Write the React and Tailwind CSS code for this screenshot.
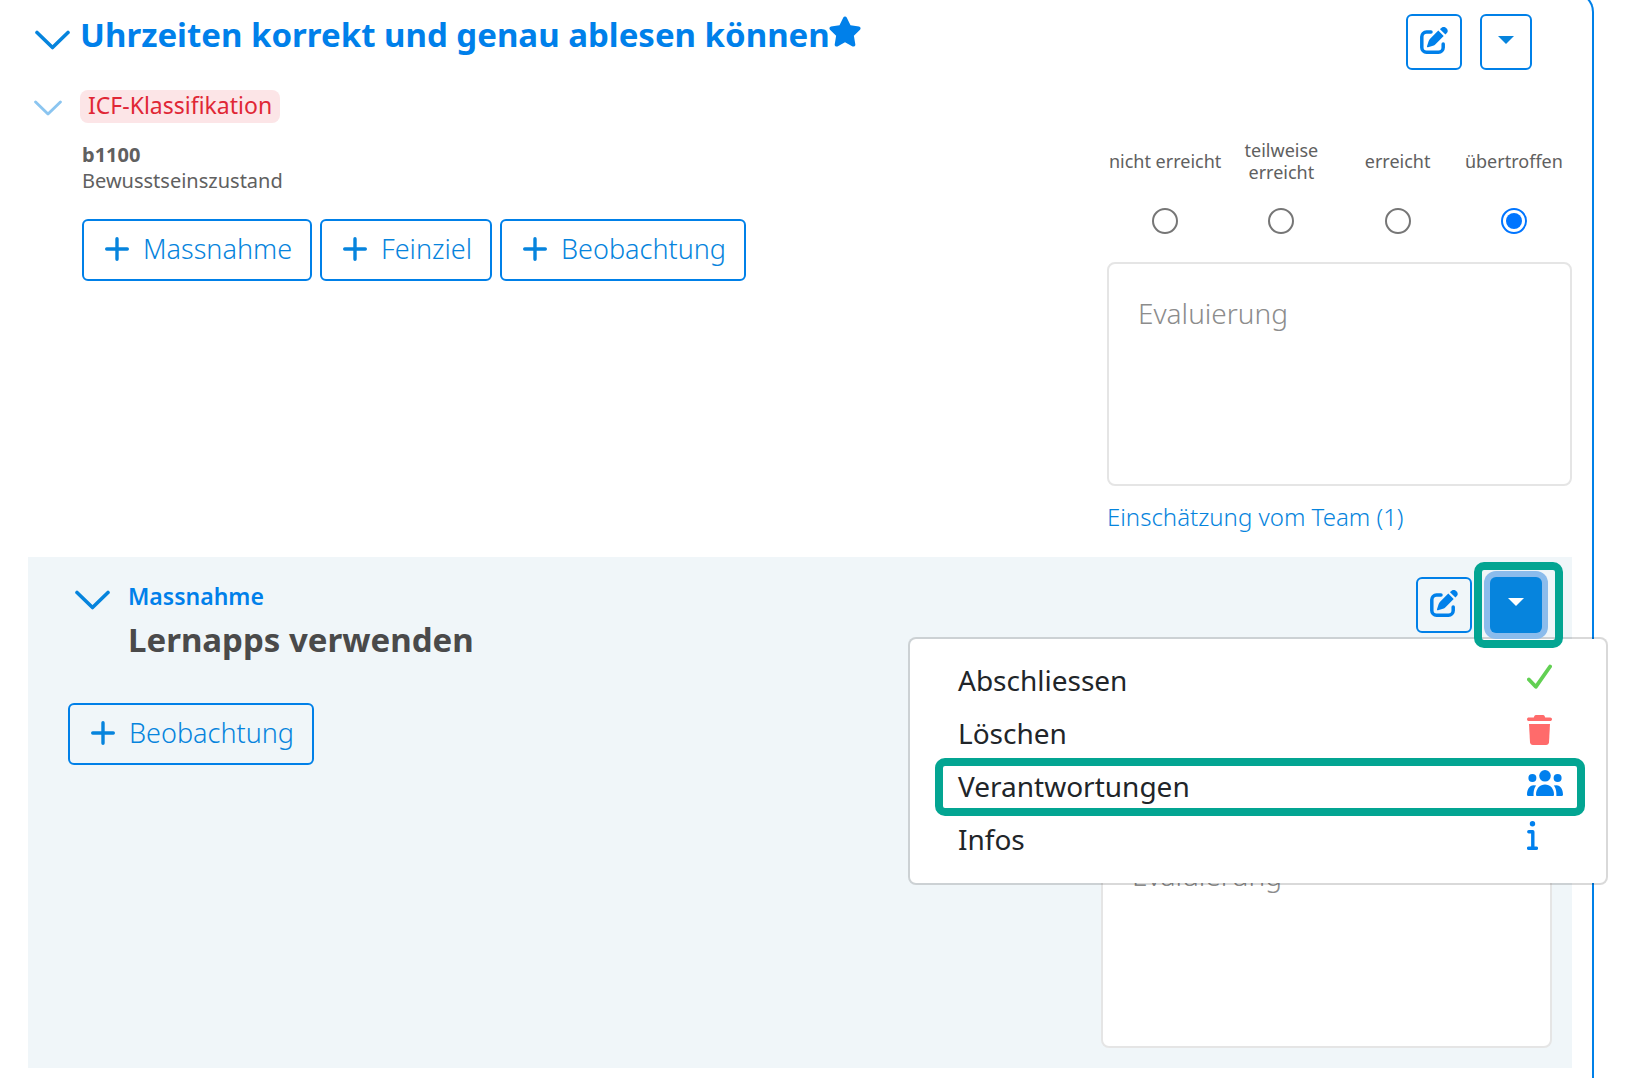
import React, { useState } from "react";
import { FaStar } from "react-icons/fa6";

const ratings = ["nicht erreicht", "teilweise erreicht", "erreicht", "übertroffen"];

function ChevronDown({ className }) {
  return (
    <svg viewBox="0 0 35 20" fill="none" className={className} aria-hidden="true">
      <path
        d="M2 2.5 17.5 17.5 33 2.5"
        stroke="currentColor"
        strokeWidth="3.6"
        strokeLinecap="round"
        strokeLinejoin="round"
      />
    </svg>
  );
}

function PlusIcon() {
  return (
    <svg viewBox="0 0 24 24" className="h-6 w-6" aria-hidden="true">
      <path
        d="M12 1.7v20.6M1.7 12h20.6"
        stroke="currentColor"
        strokeWidth="3.4"
        strokeLinecap="round"
      />
    </svg>
  );
}

function EditIcon() {
  return (
    <svg viewBox="0 0 28 28" className="h-7 w-7" aria-hidden="true">
      <path
        d="M11 5H6.5a4.7 4.7 0 0 0-4.7 4.7v10.8a4.7 4.7 0 0 0 4.7 4.7h12a4.7 4.7 0 0 0 4.7-4.7V17"
        fill="none"
        stroke="currentColor"
        strokeWidth="3.5"
        strokeLinecap="round"
      />
      <path
        d="M18.3 3.6 23.7 9l-8.2 8.2c-.7.7-1.5 1.2-2.5 1.5l-5 1.6c-.7.2-1.2-.3-1-1l1.6-5c.3-1 .8-1.8 1.5-2.5z"
        fill="currentColor"
      />
      <path d="M20 2.2l1-1a3.7 3.7 0 0 1 5.4 5.4l-1 1z" fill="currentColor" />
    </svg>
  );
}

function CaretIcon() {
  return (
    <svg viewBox="0 0 16 8" className="h-2 w-4" fill="currentColor" aria-hidden="true">
      <path d="M0 0h16L8 8z" />
    </svg>
  );
}

function CheckIcon() {
  return (
    <svg viewBox="0 0 25 25" className="h-[25px] w-[25px] text-[#62d053]" fill="none" aria-hidden="true">
      <path
        d="M1.9 15.5 8.8 22.8 23.1 2.5"
        stroke="currentColor"
        strokeWidth="3.8"
        strokeLinecap="round"
        strokeLinejoin="round"
      />
    </svg>
  );
}

function TrashIcon() {
  return (
    <svg viewBox="0 0 25 30" className="h-[30px] w-[25px] text-[#ff6b6b]" fill="currentColor" aria-hidden="true">
      <path d="M9 0h7c.8 0 1.300.4 1.600 1.100l.6 1.500h5c1 0 1.800.8 1.800 1.700S24.200 6.100 23.200 6.100H1.800C.8 6.100 0 5.300 0 4.300s.8-1.700 1.800-1.700h5l.6-1.500C7.700.4 8.200 0 9 0z" />
      <path d="M2 9h21l-1 18.200c-.1 1.600-1.300 2.800-2.900 2.800H5.900C4.300 30 3.100 28.800 3 27.200z" />
    </svg>
  );
}

function UsersIcon() {
  return (
    <svg viewBox="0 0 36 26" className="h-[26px] w-9 text-[#0080ee]" fill="currentColor" aria-hidden="true">
      <circle cx="18" cy="5.8" r="5.8" />
      <circle cx="5.4" cy="8" r="4" />
      <circle cx="30.6" cy="8" r="4" />
      <path d="M9 24.5c0-6 4-10 9-10s9 4 9 10c0 1-.5 1.500-1.500 1.500h-15C9.500 26 9 25.500 9 24.500z" />
      <path d="M9.200 15.500C7.500 17.500 6.400 20.500 6.600 26H1.200C.4 26 0 25.500 0 24.800 0 19.500 2.500 15.500 6.500 15.300z" />
      <path d="M26.800 15.500c1.700 2 2.800 5 2.600 10.500h5.400c.8 0 1.200-.5 1.200-1.200 0-5.300-2.500-9.300-6.500-9.500z" />
    </svg>
  );
}

function InfoIcon() {
  return (
    <svg viewBox="0 0 11 29" className="h-[29px] w-[11px] text-[#0080ee]" aria-hidden="true">
      <circle cx="5.5" cy="2.7" r="2.7" fill="currentColor" />
      <path
        d="M1.8 10.8H5.8V27.3M1.6 27.3H9.4"
        fill="none"
        stroke="currentColor"
        strokeWidth="3.4"
        strokeLinecap="round"
        strokeLinejoin="round"
      />
    </svg>
  );
}

function AddButton({ children }) {
  return (
    <button
      type="button"
      className="flex h-[62px] items-center gap-3.5 rounded-md border-2 border-[#0080e8] pr-[18px] pb-0.5 pl-[21px] text-[27px] font-light text-[#0684dd]"
    >
      <PlusIcon />
      {children}
    </button>
  );
}

function EditButton() {
  return (
    <button
      type="button"
      aria-label="Bearbeiten"
      className="flex h-14 w-14 items-center justify-center rounded-md border-2 border-[#0080e8] pb-0.5 text-[#0080ea]"
    >
      <EditIcon />
    </button>
  );
}

function Evaluation({ name, initial }) {
  const [rating, setRating] = useState(initial);

  return (
    <>
      <div className="grid grid-cols-4">
        {ratings.map((label) => (
          <label
            key={label}
            className="flex flex-col items-center text-center text-[18px] leading-[22px] text-[#606060]"
          >
            <span className="flex h-11 items-center">{label}</span>
            <input
              type="radio"
              name={name}
              value={label}
              checked={rating === label}
              onChange={(e) => setRating(e.target.value)}
              className="mt-[25px] flex h-[26px] w-[26px] appearance-none items-center justify-center rounded-full border-2 border-[#767676] bg-white before:h-4 before:w-4 before:rounded-full checked:border-[#0075ff] checked:before:bg-[#0075ff]"
            />
          </label>
        ))}
      </div>
      <textarea
        aria-label="Evaluierung"
        placeholder="Evaluierung"
        className="mt-7 block h-[224px] w-full resize-none rounded-lg border-2 border-[#e5e5e5] bg-white p-[29px] text-[28px] leading-10 font-light placeholder:text-[#8c8c8c]"
      />
    </>
  );
}

const menuItems = [
  { label: "Abschliessen", icon: <CheckIcon /> },
  { label: "Löschen", icon: <TrashIcon /> },
  { label: "Verantwortungen", icon: <UsersIcon />, marked: true },
  { label: "Infos", icon: <InfoIcon /> },
];

function ActionMenu() {
  return (
    <ul className="absolute top-[60px] right-[-66px] w-[700px] rounded-lg border-2 border-black/15 bg-white bg-clip-padding pt-[15px] pb-[17px]">
      {menuItems.map((item) => (
        <li key={item.label} className="relative">
          <button
            type="button"
            className="flex h-[53px] w-full items-center justify-between pr-[43px] pb-0.5 pl-12 text-[28px] text-[#212529]"
          >
            {item.label}
            <span className="mb-1.5 w-9">{item.icon}</span>
          </button>
          {item.marked && (
            <span className="pointer-events-none absolute -top-0.5 right-[21px] -bottom-[3px] left-[25px] rounded-[10px] border-8 border-[#03a592]" />
          )}
        </li>
      ))}
    </ul>
  );
}

function Measure() {
  const [open, setOpen] = useState(true);

  return (
    <section className="mt-6 bg-[#f0f6f9] pt-5 pb-5 pl-10">
      <div className="flex items-start justify-between pr-[30px]">
        <div className="flex items-start">
          <button type="button" aria-label="Massnahme zuklappen" className="mt-[13px] w-[60px] pl-[7px] text-[#0684dd]">
            <ChevronDown className="h-5 w-[35px]" />
          </button>
          <div>
            <p className="text-[23px] leading-[38px] font-semibold text-[#0080ea]">Massnahme</p>
            <h2 className="text-[33px] leading-[50px] font-bold text-[#4a4a4a]">Lernapps verwenden</h2>
          </div>
        </div>
        <div className="flex gap-[18px]">
          <EditButton />
          <div className="relative">
            {open && <ActionMenu />}
            <button
              type="button"
              aria-label="Aktionen"
              aria-expanded={open}
              onClick={() => setOpen(!open)}
              className="relative flex h-14 w-[52px] items-center justify-center rounded-md bg-[#0684dd] pb-1.5 text-white ring-6 ring-[#8bbcec]"
            >
              <CaretIcon />
            </button>
            <span className="pointer-events-none absolute -top-[15px] -right-[21px] -bottom-[15px] -left-4 rounded-[10px] border-8 border-[#03a592]" />
          </div>
        </div>
      </div>
      <div className="flex items-start justify-between pr-5">
        <div className="mt-[38px]">
          <AddButton>Beobachtung</AddButton>
        </div>
        <div className="w-[451px] pt-9">
          <Evaluation name="massnahme" initial="" />
        </div>
      </div>
    </section>
  );
}

export default function App() {
  return (
    <main className="overflow-hidden bg-white font-['Noto_Sans',sans-serif]">
      <div className="-mt-2 mr-11 min-h-[calc(100vh+8px)] rounded-tr-[20px] border-t-2 border-r-2 border-[#0080e8] pt-5 pr-5 pl-7">
        <header className="flex items-start justify-between pr-10">
          <div className="flex items-start">
            <button type="button" aria-label="Ziel zuklappen" className="mt-4 w-[52px] pl-[7px] text-[#0684dd]">
              <ChevronDown className="h-5 w-[35px]" />
            </button>
            <h1 className="text-[33px] leading-[42px] font-bold text-[#0080ea]">
              Uhrzeiten korrekt und genau ablesen können
            </h1>
            <FaStar className="mt-0.5 -ml-0.5 h-[31px] w-[34px] text-[#0080ea]" />
          </div>
          <div className="flex gap-[18px]">
            <EditButton />
            <button
              type="button"
              aria-label="Aktionen"
              className="flex h-14 w-[52px] items-center justify-center rounded-md border-2 border-[#0080e8] pb-1 text-[#0684dd]"
            >
              <CaretIcon />
            </button>
          </div>
        </header>

        <div className="mt-5 flex items-start justify-between">
          <div className="flex items-start">
            <button type="button" aria-label="ICF-Klassifikation zuklappen" className="mt-2.5 w-[52px] pl-1.5 text-[#8bc5f0]">
              <ChevronDown className="h-4 w-7" />
            </button>
            <div>
              <span className="inline-block h-[33px] rounded-lg bg-[#fce5e7] px-2 align-top text-[23px] leading-[30px] text-[#e02735]">
                ICF-Klassifikation
              </span>
              <div className="mt-[19px] ml-0.5 text-[20px] leading-[26px] text-[#606060]">
                <p className="font-bold">b1100</p>
                <p>Bewusstseinszustand</p>
              </div>
              <div className="mt-[25px] ml-0.5 flex gap-2">
                <AddButton>Massnahme</AddButton>
                <AddButton>Feinziel</AddButton>
                <AddButton>Beobachtung</AddButton>
              </div>
            </div>
          </div>
          <div className="w-[465px] pt-[49px]">
            <Evaluation name="ziel" initial="übertroffen" />
            <a href="#team" className="mt-[15px] block text-[24px] leading-8 font-light text-[#0684dd]">
              Einschätzung vom Team (1)
            </a>
          </div>
        </div>

        <Measure />
      </div>
    </main>
  );
}
